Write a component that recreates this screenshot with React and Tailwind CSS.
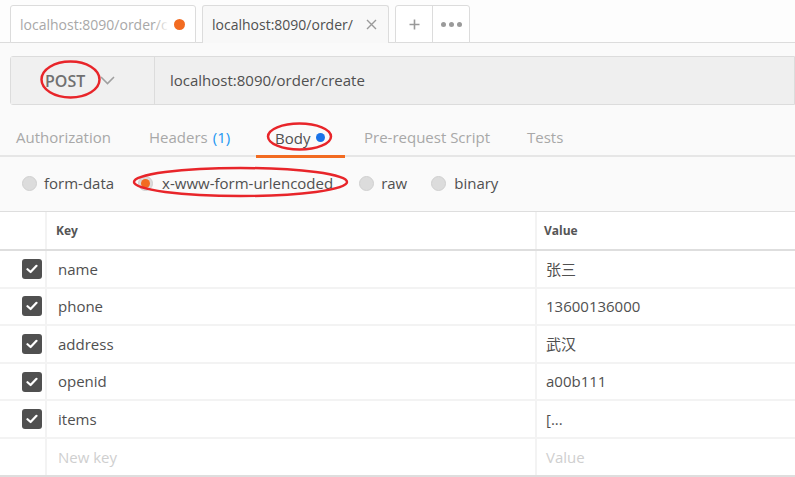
import React from "react";

const rows = [
  { k: "name", v: "张三" },
  { k: "phone", v: "13600136000" },
  { k: "address", v: "武汉" },
  { k: "openid", v: "a00b111" },
  { k: "items", v: "[..." },
];

function Check() {
  return (
    <div className="w-[20px] h-[20px] rounded-[3px] bg-[#505050] flex items-center justify-center">
      <svg width="12" height="10" viewBox="0 0 12 10">
        <path d="M1.5 5.2 L4.6 8 L10.5 1.8" stroke="#fff" strokeWidth="2.2" fill="none" strokeLinecap="round" strokeLinejoin="round" />
      </svg>
    </div>
  );
}

function Radio({ active }) {
  return (
    <div className="w-[15px] h-[15px] rounded-full bg-[#dcdcdc] border border-[#d0d0d0] flex items-center justify-center">
      {active && <div className="w-[9px] h-[9px] rounded-full bg-[#f26b21]" />}
    </div>
  );
}

export default function App() {
  return (
    <div
      className="relative w-[795px] h-[477px] overflow-hidden bg-[#fafafa] text-[#505050]"
      style={{ fontFamily: '"Open Sans", "Noto Sans CJK SC", sans-serif' }}
    >
      {/* top tabs */}
      <div className="h-[43px] bg-[#fdfdfd] border-b border-[#dcdcdc] flex items-end pl-[10px] gap-[6px]">
        <div className="relative w-[186px] h-[38px] bg-white border border-[#dcdcdc] rounded-t-[3px] flex items-center pl-[9px] pr-[10px] -mb-px">
          <span className="text-[14px] text-[#a8a8a8] whitespace-nowrap">localhost:8090/order/c</span>
          <div className="absolute right-[26px] top-[2px] bottom-[2px] w-[14px] bg-gradient-to-r from-transparent to-white" />
          <div className="ml-auto w-[11px] h-[11px] rounded-full bg-[#f26b21] relative" />
        </div>
        <div className="w-[187px] h-[38px] bg-[#f8f8f8] border border-b-0 border-[#dcdcdc] rounded-t-[3px] flex items-center pl-[9px] pr-[11px] -mb-px">
          <span className="text-[14px] text-[#505050] whitespace-nowrap">localhost:8090/order/</span>
          <svg className="ml-auto" width="11" height="11" viewBox="0 0 11 11">
            <path d="M1 1 L10 10 M10 1 L1 10" stroke="#9a9a9a" strokeWidth="1.4" />
          </svg>
        </div>
        <div className="h-[38px] bg-white border border-[#dcdcdc] rounded-t-[3px] flex -mb-px">
          <div className="w-[37px] flex items-center justify-center border-r border-[#dcdcdc]">
            <svg width="11" height="11" viewBox="0 0 11 11">
              <path d="M5.5 0.5 V10.5 M0.5 5.5 H10.5" stroke="#9a9a9a" strokeWidth="1.6" />
            </svg>
          </div>
          <div className="w-[36px] flex items-center justify-center gap-[3px]">
            <div className="w-[5px] h-[5px] rounded-full bg-[#9a9a9a]" />
            <div className="w-[5px] h-[5px] rounded-full bg-[#9a9a9a]" />
            <div className="w-[5px] h-[5px] rounded-full bg-[#9a9a9a]" />
          </div>
        </div>
      </div>

      {/* URL bar */}
      <div className="mt-[13px] ml-[10px] h-[49px] flex border border-[#dcdcdc] rounded-l-[3px] bg-[#efefef]">
        <div className="w-[144px] flex items-center pl-[34px] border-r border-[#dcdcdc] bg-[#f0f0f0]">
          <span className="text-[16px] font-semibold text-[#707070]">POST</span>
          <svg className="ml-[15px]" width="15" height="9" viewBox="0 0 15 9">
            <path d="M1 1 L7.5 7.5 L14 1" stroke="#a0a0a0" strokeWidth="1.6" fill="none" />
          </svg>
        </div>
        <div className="flex-1 flex items-center pl-[15px]">
          <span className="text-[15px] text-[#505050]">localhost:8090/order/create</span>
        </div>
      </div>

      {/* request tabs */}
      <div className="h-[52px] border-b-2 border-[#e6e6e6] flex text-[15px] text-[#a8a8a8]">
        <div className="pl-[16px] w-[149px] h-full flex items-end pb-[7px]">Authorization</div>
        <div className="w-[107px] h-full flex items-end pb-[7px]">
          Headers <span className="ml-[5px] text-[#2196f3]">(1)</span>
        </div>
        <div className="w-[89px] h-[53px] flex items-end border-b-[3px] border-[#f26b21] pl-[19px] pb-[6px] text-[#505050]">
          <span>Body</span>
          <div className="ml-[6px] mb-[7px] w-[9px] h-[9px] rounded-full bg-[#1a73e8]" />
        </div>
        <div className="pl-[19px] w-[182px] h-full flex items-end pb-[7px]">Pre-request Script</div>
        <div className="h-full flex items-end pb-[7px]">Tests</div>
      </div>

      {/* radio row */}
      <div className="h-[54px] pb-[2px] flex items-center pl-[22px] text-[15px] text-[#505050]">
        <Radio />
        <span className="ml-[7px]">form-data</span>
        <div className="ml-[24px]"><Radio active /></div>
        <span className="ml-[9px]">x-www-form-urlencoded</span>
        <div className="ml-[26px]"><Radio /></div>
        <span className="ml-[7px]">raw</span>
        <div className="ml-[24px]"><Radio /></div>
        <span className="ml-[8px]">binary</span>
      </div>

      {/* table */}
      <div className="border-t border-[#dedede] bg-white">
        <div className="h-[39px] flex border-b-2 border-[#dedede] text-[12px] font-bold text-[#555]">
          <div className="w-[47px] border-r-2 border-[#f3f3f3]" />
          <div className="w-[490px] flex items-center pl-[9px] border-r-2 border-[#f3f3f3]">Key</div>
          <div className="flex-1 flex items-center pl-[7px]">Value</div>
        </div>
        {rows.map((r) => (
          <div key={r.k} className="h-[37.6px] flex border-b-2 border-[#f3f3f3] text-[15px] text-[#505050]">
            <div className="w-[47px] border-r-2 border-[#f3f3f3] flex items-center justify-end pr-[3px]">
              <Check />
            </div>
            <div className="w-[490px] flex items-center pl-[11px] border-r-2 border-[#f3f3f3]">{r.k}</div>
            <div className="flex-1 flex items-center pl-[9px]">{r.v}</div>
          </div>
        ))}
        <div className="h-[37.6px] flex border-b-2 border-[#dedede] text-[15px] text-[#cfcfcf]">
          <div className="w-[47px] border-r-2 border-[#f3f3f3]" />
          <div className="w-[490px] flex items-center pl-[11px] border-r-2 border-[#f3f3f3]">New key</div>
          <div className="flex-1 flex items-center pl-[9px]">Value</div>
        </div>
      </div>

      {/* red annotation ellipses */}
      <svg className="absolute left-0 top-0 pointer-events-none" width="795" height="477">
        <ellipse cx="70.5" cy="79.5" rx="29" ry="18" fill="none" stroke="#e8252a" strokeWidth="2.5" />
        <ellipse cx="299.5" cy="136.5" rx="31.5" ry="13" fill="none" stroke="#e8252a" strokeWidth="2.5" />
        <ellipse cx="240.5" cy="182" rx="106.5" ry="14" fill="none" stroke="#e8252a" strokeWidth="2.5" />
      </svg>
    </div>
  );
}
